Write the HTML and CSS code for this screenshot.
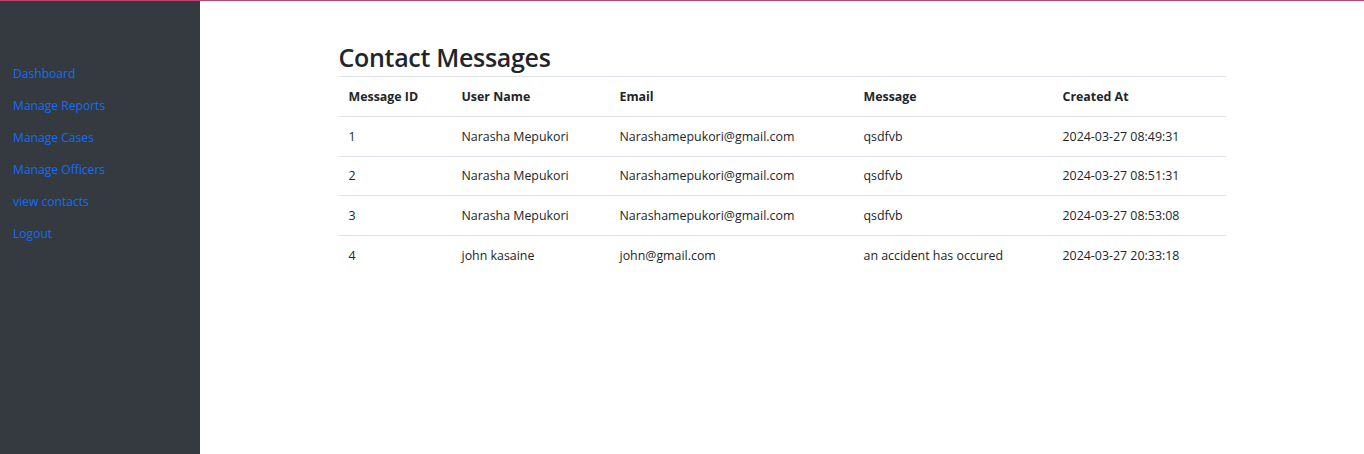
FILE: index.html
```html
<!DOCTYPE html>
<html lang="en">
<head>
<meta charset="utf-8">
<title>Contact Messages</title>
<link rel="stylesheet" href="styles.css">
</head>
<body>
<div class="topline"></div>
<div class="layout">
  <nav class="sidebar">
    <ul class="nav">
      <li><a href="#">Dashboard</a></li>
      <li><a href="#">Manage Reports</a></li>
      <li><a href="#">Manage Cases</a></li>
      <li><a href="#">Manage Officers</a></li>
      <li><a href="#">view contacts</a></li>
      <li><a href="#">Logout</a></li>
    </ul>
  </nav>
  <main class="main">
    <div class="container">
      <h2 class="title">Contact Messages</h2>
      <table class="table">
        <colgroup>
          <col class="c-id"><col class="c-name"><col class="c-email"><col class="c-msg"><col class="c-date">
        </colgroup>
        <thead>
          <tr><th>Message ID</th><th>User Name</th><th>Email</th><th>Message</th><th>Created At</th></tr>
        </thead>
        <tbody>
          <tr><td>1</td><td>Narasha Mepukori</td><td>Narashamepukori@gmail.com</td><td>qsdfvb</td><td>2024-03-27 08:49:31</td></tr>
          <tr><td>2</td><td>Narasha Mepukori</td><td>Narashamepukori@gmail.com</td><td>qsdfvb</td><td>2024-03-27 08:51:31</td></tr>
          <tr><td>3</td><td>Narasha Mepukori</td><td>Narashamepukori@gmail.com</td><td>qsdfvb</td><td>2024-03-27 08:53:08</td></tr>
          <tr><td>4</td><td>john kasaine</td><td>john@gmail.com</td><td>an accident has occured</td><td>2024-03-27 20:33:18</td></tr>
        </tbody>
      </table>
    </div>
  </main>
</div>
</body>
</html>
```
FILE: styles.css
```css
* { box-sizing: border-box; }
html, body { margin: 0; padding: 0; height: 100%; }
body {
  font-family: "Open Sans", "Noto Sans", "Liberation Sans", sans-serif;
  color: #212529;
  background: #fff;
  display: flex;
  flex-direction: column;
}
.topline { height: 1px; background: #c2416d; flex: none; }
.layout { display: flex; flex: 1; min-height: 0; }
.sidebar {
  width: 200px;
  flex: none;
  background: #343a40;
  padding-top: 59px;
}
.nav { list-style: none; margin: 0; padding: 0 0 0 13px; }
.nav li { height: 32px; line-height: 24px; }
.nav a { color: #0d6efd; text-decoration: none; font-size: 12.1px; }
.main { flex: 1; }
.container { width: 887px; margin: 0 auto; padding-top: 37px; }
.title {
  margin: 0;
  font-size: 25px;
  font-weight: 600;
  line-height: 38px;
  height: 38px;
  letter-spacing: -0.3px;
}
.table { width: 100%; border-collapse: collapse; font-size: 12.4px; }
.c-id { width: 113px; }
.c-name { width: 158px; }
.c-email { width: 244px; }
.c-msg { width: 199px; }
.c-date { width: 173px; }
.table th, .table td {
  text-align: left;
  padding: 0 10px;
  vertical-align: middle;
}
.table thead th {
  font-weight: 700;
  height: 40px;
  border-top: 1px solid #dee2e6;
  border-bottom: 1px solid #dee2e6;
}
.table tbody td { height: 39.5px; border-top: 1px solid #dee2e6; }
.table tbody tr:first-child td { border-top: none; }
```
